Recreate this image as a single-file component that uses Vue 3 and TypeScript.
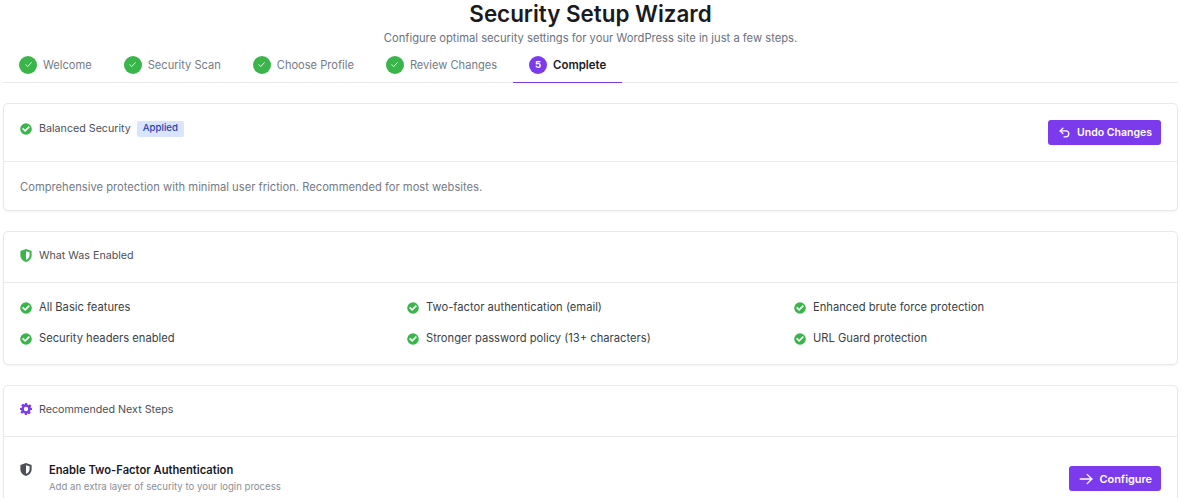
<script setup lang="ts">
const steps: string[] = ['Welcome', 'Security Scan', 'Choose Profile', 'Review Changes']
const enabled: string[] = [
  'All Basic features',
  'Two-factor authentication (email)',
  'Enhanced brute force protection',
  'Security headers enabled',
  'Stronger password policy (13+ characters)',
  'URL Guard protection',
]
</script>

<template>
  <div class="page">
    <h1 class="title">Security Setup Wizard</h1>
    <p class="subtitle">Configure optimal security settings for your WordPress site in just a few steps.</p>

    <nav class="tabs">
      <div v-for="s in steps" :key="s" class="tab">
        <span class="badge done">
          <svg width="9" height="9" viewBox="0 0 24 24" fill="none" stroke="#fff" stroke-width="2.4" stroke-linecap="round" stroke-linejoin="round"><path d="M5 12.5l5 5L19.5 7" /></svg>
        </span>
        <span>{{ s }}</span>
      </div>
      <div class="tab active">
        <span class="badge current">5</span>
        <span>Complete</span>
      </div>
    </nav>

    <section class="card">
      <header class="head head-tall">
        <div class="head-title">
          <svg class="ico" viewBox="0 0 512 512" fill="#39b54a"><path d="M256 8a248 248 0 1 0 0 496 248 248 0 0 0 0-496zm-38 379L88 257l50-50 80 80 156-156 50 50-206 206z" /></svg>
          <span>Balanced Security</span>
          <span class="pill">Applied</span>
        </div>
        <button class="btn btn-undo" type="button">
          <svg width="13" height="13" viewBox="0 0 24 24" fill="none" stroke="#fff" stroke-width="2.4" stroke-linecap="round" stroke-linejoin="round"><path d="M9 14L4 9l5-5" /><path d="M4 9h10.500a5.500 5.500 0 0 1 0 11H11" /></svg>
          <span>Undo Changes</span>
        </button>
      </header>
      <div class="body muted">Comprehensive protection with minimal user friction. Recommended for most websites.</div>
    </section>

    <section class="card">
      <header class="head">
        <div class="head-title">
          <svg class="ico shield" viewBox="2 1 20 22"><path fill="#39b54a" d="M12 1l9.500 3.300v7.200c0 5.600-3.900 9.900-9.500 11.500C6.400 21.400 2.500 17.100 2.500 11.500V4.300L12 1z" /><path fill="#fff" d="M12 4.600v14.800c3.700-1.400 6-4.300 6-7.900V6.700L12 4.600z" /></svg>
          <span>What Was Enabled</span>
        </div>
      </header>
      <div class="grid">
        <div v-for="e in enabled" :key="e" class="item">
          <svg class="ico" viewBox="0 0 512 512" fill="#39b54a"><path d="M256 8a248 248 0 1 0 0 496 248 248 0 0 0 0-496zm-38 379L88 257l50-50 80 80 156-156 50 50-206 206z" /></svg>
          <span>{{ e }}</span>
        </div>
      </div>
    </section>

    <section class="card">
      <header class="head">
        <div class="head-title">
          <svg class="ico" viewBox="1 1 22 22"><path fill="#7c3aed" fill-rule="evenodd" d="M10 1h4l.7 3.100 1.800.8 2.700-1.700 2.800 2.800-1.700 2.700.8 1.800L23 10.200v3.600l-3.100.7-.8 1.800 1.700 2.700-2.800 2.800-2.700-1.700-1.800.8L14 23h-4l-.7-3.100-1.800-.8-2.700 1.700-2.800-2.800 1.700-2.700-.8-1.800L1 13.800v-3.600l3.100-.7.8-1.800-1.700-2.700 2.800-2.800 2.700 1.700 1.800-.8L10 1zm2 7a4 4 0 1 0 0 8 4 4 0 0 0 0-8z" /></svg>
          <span>Recommended Next Steps</span>
        </div>
      </header>
      <div class="next">
        <svg class="ico shield next-ico" viewBox="2 1 20 22"><path fill="#4b4f58" d="M12 1l9.500 3.300v7.200c0 5.600-3.900 9.900-9.500 11.500C6.400 21.400 2.500 17.100 2.500 11.500V4.300L12 1z" /><path fill="#fff" d="M12 4.600v14.800c3.700-1.400 6-4.300 6-7.900V6.700L12 4.600z" /></svg>
        <div class="next-text">
          <div class="next-title">Enable Two-Factor Authentication</div>
          <div class="next-desc">Add an extra layer of security to your login process</div>
        </div>
        <button class="btn btn-next" type="button">
          <svg width="14" height="14" viewBox="0 0 24 24" fill="none" stroke="#fff" stroke-width="2.2" stroke-linecap="round" stroke-linejoin="round"><path d="M2 12h20" /><path d="M14 4l8 8-8 8" /></svg>
          <span>Configure</span>
        </button>
      </div>
    </section>
  </div>
</template>

<style scoped>
.page {
  box-sizing: border-box;
  width: 1181px;
  height: 498px;
  overflow: hidden;
  padding: 0 3px;
  font-family: Inter, "Noto Sans", sans-serif;
  color: #1d2327;
  background: #fff;
}
.title {
  margin: 0;
  font-size: 22.4px;
  line-height: 28px;
  font-weight: 600;
  text-align: center;
  color: #1a1a1f;
}
.subtitle {
  margin: 1px 0 0;
  font-size: 11.2px;
  line-height: 18px;
  text-align: center;
  color: #6b7280;
}
.tabs {
  display: flex;
  box-sizing: border-box;
  height: 36px;
  border-bottom: 1px solid #e9e9ec;
}
.tab {
  display: flex;
  align-items: center;
  gap: 6px;
  box-sizing: border-box;
  height: 36px;
  margin-bottom: -1px;
  padding: 0 16px;
  font-size: 11.1px;
  color: #757b85;
  border-bottom: 1px solid transparent;
}
.tab.active {
  font-size: 11.4px;
  color: #1a1a1f;
  font-weight: 600;
  border-bottom-color: #7c3aed;
}
.badge {
  width: 18px;
  height: 18px;
  border-radius: 50%;
  display: inline-flex;
  align-items: center;
  justify-content: center;
  color: #fff;
  font-size: 9.6px;
  font-weight: 700;
}
.done { background: #39b54a; }
.current { background: #7c3aed; }
.card {
  margin-top: 20px;
  background: #fff;
  border: 1px solid #e9e9ec;
  border-radius: 5px;
  box-shadow: 0 1px 2px rgba(0, 0, 0, 0.05);
}
.head {
  display: flex;
  align-items: center;
  justify-content: space-between;
  height: 50px;
  padding: 0 16px;
  border-bottom: 1px solid #e9e9ec;
}
.head-tall { height: 57px; }
.head-title {
  display: flex;
  align-items: center;
  margin-top: -4px;
  font-size: 10.7px;
  color: #4b4f58;
}
.head-tall .head-title { margin-top: -8px; }
.ico {
  width: 12px;
  height: 12px;
  margin-right: 7px;
  flex: none;
}
.shield { height: 13px; }
.pill {
  margin-left: 6px;
  padding: 0 6px;
  height: 16px;
  line-height: 14px;
  border-radius: 2px;
  background: #d8e5fc;
  color: #1e40af;
  font-size: 9.6px;
  font-weight: 500;
}
.btn {
  display: inline-flex;
  align-items: center;
  gap: 6px;
  height: 25px;
  padding: 0 9px 0 10px;
  border: 0;
  border-radius: 3px;
  background: #7c3aed;
  color: #fff;
  font-family: inherit;
  font-weight: 600;
  flex: none;
}
.btn-undo { font-size: 10.5px; }
.btn-next {
  margin-top: 4px;
  gap: 7px;
  font-size: 10.9px;
}
.body {
  padding: 17px 16px 15px;
  line-height: 16px;
  font-size: 11.2px;
}
.muted { color: #757b85; }
.grid {
  display: grid;
  grid-template-columns: repeat(3, 1fr);
  column-gap: 20px;
  row-gap: 14px;
  padding: 16px 16px 17px;
}
.item {
  display: flex;
  align-items: center;
  font-size: 11.2px;
  line-height: 17px;
  color: #3a3f47;
}
.next {
  display: flex;
  align-items: flex-start;
  padding: 25px 16px 30px;
}
.next-ico {
  margin-right: 17px;
  margin-top: 1px;
}
.next-text { flex: 1; }
.next-title {
  font-size: 11.2px;
  font-weight: 600;
  line-height: 16px;
  color: #1a1a1f;
}
.next-desc {
  margin-top: 1px;
  font-size: 9.6px;
  line-height: 16px;
  color: #8a8f98;
}
</style>
